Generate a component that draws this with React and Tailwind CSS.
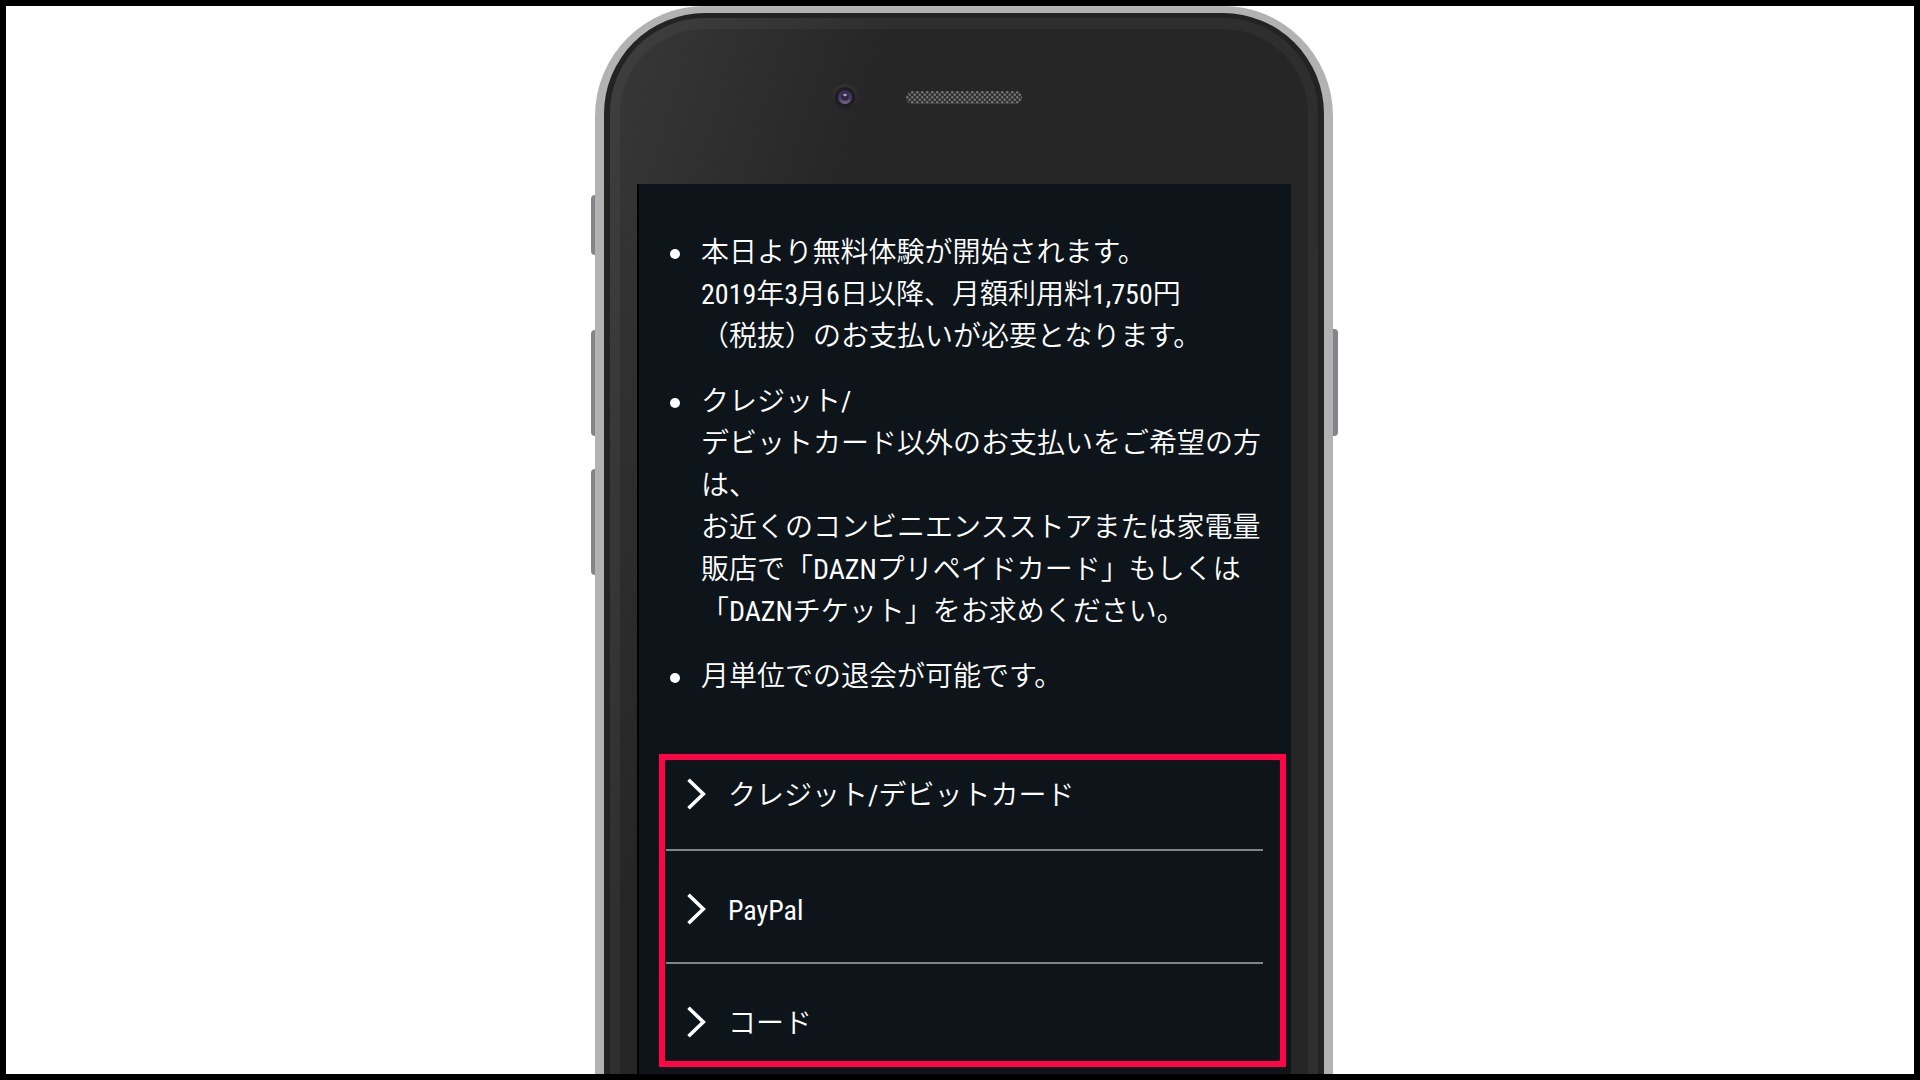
import React, { useState } from "react";

const NOTES = [
    ["本日より無料体験が開始されます。", "2019年3月6日以降、月額利用料1,750円", "（税抜）のお支払いが必要となります。"],
    [
        "クレジット/",
        "デビットカード以外のお支払いをご希望の方",
        "は、",
        "お近くのコンビニエンスストアまたは家電量",
        "販店で「DAZNプリペイドカード」もしくは",
        "「DAZNチケット」をお求めください。",
    ],
    ["月単位での退会が可能です。"],
];

const METHODS = ["クレジット/デビットカード", "PayPal", "コード"];

function Camera() {
    return (
        <svg className="size-[26px]" viewBox="0 0 26 26" aria-hidden="true">
            <defs>
                <linearGradient id="rim" x1="0" y1="0" x2="0" y2="1">
                    <stop offset="0" stopColor="#323232" />
                    <stop offset="1" stopColor="#222222" />
                </linearGradient>
                <linearGradient id="lens" x1="0" y1="0" x2="0" y2="1">
                    <stop offset="0" stopColor="#33284a" />
                    <stop offset="0.6" stopColor="#493b66" />
                    <stop offset="1" stopColor="#77698f" />
                </linearGradient>
            </defs>
            <circle cx="13" cy="13" r="13" fill="url(#rim)" />
            <circle cx="13" cy="13" r="10" fill="#1d1d1f" />
            <circle cx="13" cy="13" r="7" fill="url(#lens)" />
            <circle cx="13" cy="13" r="3.6" fill="#30263f" />
            <ellipse cx="13" cy="11" rx="1.8" ry="1.2" fill="#aaa4b6" />
        </svg>
    );
}

function Speaker() {
    return (
        <svg className="h-[13px] w-[116px]" viewBox="0 0 116 13" aria-hidden="true">
            <defs>
                <pattern id="mesh" width="5" height="5" patternUnits="userSpaceOnUse">
                    <rect width="5" height="5" fill="#2e2e2e" />
                    <circle cx="1.25" cy="1.25" r="1.2" fill="#777777" />
                    <circle cx="3.75" cy="3.75" r="1.2" fill="#777777" />
                </pattern>
            </defs>
            <rect width="116" height="13" rx="6" fill="url(#mesh)" />
        </svg>
    );
}

function Chevron() {
    return (
        <svg className="-mt-1 h-8 w-5 shrink-0" viewBox="0 0 20 32" fill="none" aria-hidden="true">
            <path d="M2.5 1.7 L17.3 16 L2.5 30.3" stroke="#fff" strokeWidth="3.6" />
        </svg>
    );
}

function Notes() {
    return (
        <ul className="space-y-[23px] pl-[31px]">
            {NOTES.map((lines) => (
                <li key={lines[0]} className="flex gap-[21px]">
                    <span className="mt-[17px] size-[10px] shrink-0 rounded-full bg-white" />
                    <p className="whitespace-nowrap">
                        {lines.map((line) => (
                            <span key={line} className="block">
                                {line}
                            </span>
                        ))}
                    </p>
                </li>
            ))}
        </ul>
    );
}

function PaymentMethods() {
    const [selected, setSelected] = useState(null);

    return (
        <ul className="mt-14 mr-[5px] ml-5 border-6 border-[#ff0546] pr-[17px]">
            {METHODS.map((name) => (
                <li key={name} className="group ml-px border-b-2 border-[#7f8487] last:border-b-0">
                    <button
                        type="button"
                        aria-pressed={selected === name}
                        onClick={() => setSelected(name)}
                        className="flex w-full items-center gap-[22px] pt-[39px] pb-[30px] pl-5 text-left group-first:pt-[15px] group-first:pb-8 group-last:pb-4"
                    >
                        <Chevron />
                        <span>{name}</span>
                    </button>
                </li>
            ))}
        </ul>
    );
}

export default function App() {
    return (
        <main className="flex min-h-screen justify-center overflow-hidden border-6 border-black bg-white pl-2">
            <div className="relative w-full max-w-[738px]">
                {/* side keys */}
                <span className="absolute top-[189px] -left-1 h-[60px] w-2 rounded-l bg-[#85848a]" />
                <span className="absolute top-[324px] -left-1 h-[106px] w-2 rounded-l bg-[#85848a]" />
                <span className="absolute top-[463px] -left-1 h-[106px] w-2 rounded-l bg-[#85848a]" />
                <span className="absolute top-[323px] -right-[5px] h-[107px] w-2 rounded-r bg-[#85848a]" />

                {/* silver frame, black band, glass */}
                <div className="relative h-full rounded-t-[110px] bg-[#b2b2b2] px-[9px] pt-[7px]">
                    <div className="h-full rounded-t-[101px] bg-[#232323] px-[6px] pt-[5px]">
                        <div className="h-full rounded-t-[95px] bg-[linear-gradient(107deg,#383838_0px,#262626_270px)]">
                            <div className="h-full rounded-t-[95px] border-x-[10px] border-t-[11px] border-white/4 px-[17px]">
                                <div className="flex justify-center gap-12 pt-[55px] pr-[74px] pb-[74px]">
                                    <Camera />
                                    <div className="flex items-center">
                                        <Speaker />
                                    </div>
                                </div>
                                <section className="border-l-2 border-black bg-[#0d151b] pt-12 pb-[7px] font-['Roboto_Condensed','Noto_Sans_CJK_JP_DemiLight','Noto_Sans_CJK_JP',sans-serif] text-[28px] leading-[42px] font-normal text-white">
                                    <Notes />
                                    <PaymentMethods />
                                </section>
                            </div>
                        </div>
                    </div>
                </div>
            </div>
        </main>
    );
}
